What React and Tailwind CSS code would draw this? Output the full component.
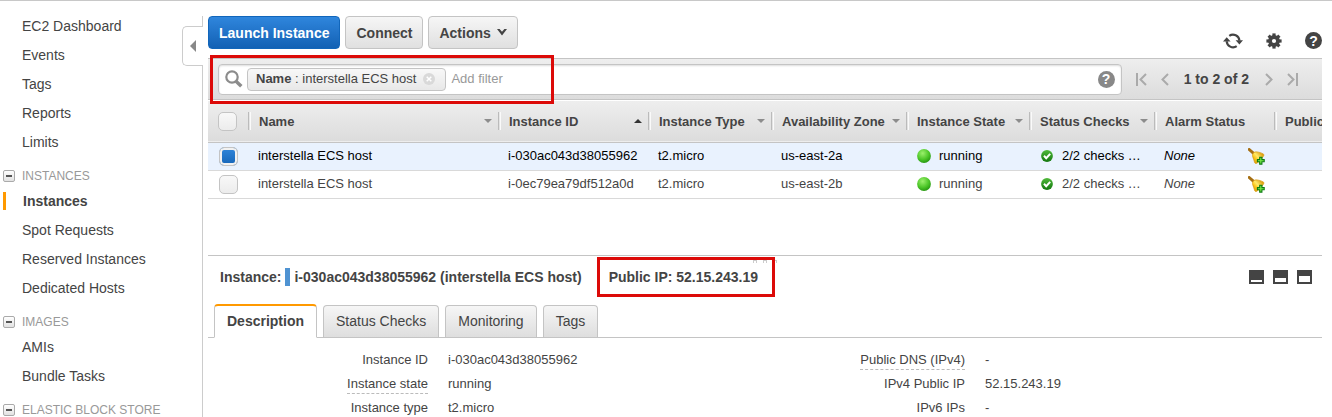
import React, { useState } from "react";
import clsx from "clsx";

const topLinks = ["EC2 Dashboard", "Events", "Tags", "Reports", "Limits"];

const groups = [
  { title: "INSTANCES", items: ["Instances", "Spot Requests", "Reserved Instances", "Dedicated Hosts"] },
  { title: "IMAGES", items: ["AMIs", "Bundle Tasks"] },
  { title: "ELASTIC BLOCK STORE", items: [] },
];

const columns = [
  { label: "Name", sort: "none" },
  { label: "Instance ID", sort: "asc" },
  { label: "Instance Type", sort: "none" },
  { label: "Availability Zone", sort: "none" },
  { label: "Instance State", sort: "none" },
  { label: "Status Checks", sort: "none" },
  { label: "Alarm Status" },
  { label: "Public" },
];

const instances = [
  { id: "i-030ac043d38055962", name: "interstella ECS host", type: "t2.micro", zone: "us-east-2a" },
  { id: "i-0ec79ea79df512a0d", name: "interstella ECS host", type: "t2.micro", zone: "us-east-2b" },
];

const tabs = ["Description", "Status Checks", "Monitoring", "Tags"];

const leftDetails = [
  { label: "Instance ID", value: "i-030ac043d38055962" },
  { label: "Instance state", value: "running", hint: true },
  { label: "Instance type", value: "t2.micro" },
];

const rightDetails = [
  { label: "Public DNS (IPv4)", value: "-", hint: true },
  { label: "IPv4 Public IP", value: "52.15.243.19" },
  { label: "IPv6 IPs", value: "-" },
];

function NavLink({ label, active }) {
  return (
    <li className="flex h-[29px] items-center pl-[3px]">
      <span className={clsx("h-[18px] w-[3px]", active && "bg-[#ff9900]")} />
      <a
        href="#"
        aria-current={active ? "page" : undefined}
        className={clsx("whitespace-nowrap", active ? "pl-[17px] font-bold" : "pl-4")}
      >
        {label}
      </a>
    </li>
  );
}

function Sidebar() {
  return (
    <aside className="flex shrink-0">
      <nav aria-label="EC2" className="w-[182px] pt-[10px] text-sm">
        <ul>
          {topLinks.map((label) => (
            <NavLink key={label} label={label} />
          ))}
        </ul>
        {groups.map((group) => (
          <section key={group.title}>
            <h2 className="flex h-[30px] items-center gap-[7px] pt-[10px] pl-[3px] text-xs whitespace-nowrap text-[#999]">
              <button
                type="button"
                aria-label={"Collapse " + group.title}
                className="flex size-3 items-center justify-center rounded-[2px] border border-[#aaa] bg-linear-to-b from-white to-[#e2e2e2]"
              >
                <span className="h-[2px] w-[6px] bg-[#555]" />
              </button>
              {group.title}
            </h2>
            <ul>
              {group.items.map((label) => (
                <NavLink key={label} label={label} active={label === "Instances"} />
              ))}
            </ul>
          </section>
        ))}
      </nav>
      <div className="flex w-[21px] flex-col pt-[15px]">
        <div className="h-[10px] border-r border-[#ccc]" />
        <button
          type="button"
          aria-label="Hide navigation"
          className="flex h-10 items-center justify-center rounded-l-[5px] border border-r-0 border-[#ccc]"
        >
          <svg width="6" height="12" viewBox="0 0 6 12" fill="#888">
            <path d="M6 0v12L0 6z" />
          </svg>
        </button>
        <div className="flex-1 border-r border-[#ccc]" />
      </div>
    </aside>
  );
}

function HelpIcon({ className }) {
  return (
    <button
      type="button"
      aria-label="Help"
      className={clsx(
        "flex size-[17px] items-center justify-center rounded-full text-sm leading-none font-bold text-white",
        className
      )}
    >
      ?
    </button>
  );
}

function RefreshIcon() {
  return (
    <svg width="20" height="16" viewBox="0 0 20 16">
      <g fill="none" stroke="#444" strokeWidth="2.2">
        <path d="M6.3 2.8A6.4 6.4 0 0 1 16.4 7.6" />
        <path d="M3.7 8.2A6.4 6.4 0 0 0 13.7 13.2" />
      </g>
      <path fill="#444" d="M3.7 4.2 7.6 8.6H0zM16.4 11.6 12.6 7.2H20z" />
    </svg>
  );
}

function GearIcon() {
  return (
    <svg width="16" height="16" viewBox="0 0 16 16">
      <g fill="#444">
        {[0, 45, 90, 135].map((angle) => (
          <rect key={angle} x="6.4" y="0.4" width="3.2" height="15.2" transform={`rotate(${angle} 8 8)`} />
        ))}
        <circle cx="8" cy="8" r="5.9" />
      </g>
      <circle cx="8" cy="8" r="2.1" fill="#fff" />
    </svg>
  );
}

function SearchIcon() {
  return (
    <svg width="18" height="18" viewBox="0 0 18 18" fill="none" stroke="#8c8c8c">
      <circle cx="7" cy="7" r="5.7" strokeWidth="2.2" />
      <path d="M11 11.2 16.3 16.3" strokeWidth="3.4" />
    </svg>
  );
}

function BellIcon() {
  return (
    <svg width="17" height="17" viewBox="0 0 17 17">
      <defs>
        <linearGradient id="bell" x1="0.15" y1="0.9" x2="0.9" y2="0.2">
          <stop offset="0" stopColor="#d99a0a" />
          <stop offset="0.3" stopColor="#fbc81c" />
          <stop offset="0.55" stopColor="#ffe96a" />
          <stop offset="1" stopColor="#dc9c08" />
        </linearGradient>
      </defs>
      <path d="M1.2 1.5 5.6 5.4" stroke="#a66f12" strokeWidth="3" strokeLinecap="round" />
      <path
        d="M4.600 8.400C4 6 6 3.600 8.800 3.900c2.400.3 4 .7 6.400 2 1 .6.800 1.400.2 2.300-1.700 2.800-3.800 5.200-6.600 7-1 .6-1.900.2-2.200-.8C6.200 12.200 5.200 10.600 4.600 8.400z"
        fill="url(#bell)"
        stroke="#d9980e"
        strokeWidth="0.7"
      />
      <path
        d="M11.700 9.300h2.200v2.300h2.300v2.200h-2.300v2.300h-2.200v-2.300H9.400v-2.200h2.300z"
        fill="#7cf04a"
        stroke="#0b7a10"
        strokeWidth="1.100"
      />
    </svg>
  );
}

function StateDot() {
  return (
    <svg width="14" height="14" viewBox="0 0 14 14">
      <defs>
        <radialGradient id="dot" cx="0.4" cy="0.3" r="0.75">
          <stop offset="0" stopColor="#9bf06c" />
          <stop offset="0.6" stopColor="#4cc628" />
          <stop offset="1" stopColor="#23920f" />
        </radialGradient>
      </defs>
      <circle cx="7" cy="7" r="6.900" fill="url(#dot)" />
    </svg>
  );
}

function CheckBadge() {
  return (
    <svg width="12" height="12" viewBox="0 0 12 12">
      <defs>
        <linearGradient id="badge" x1="0" y1="0" x2="0" y2="1">
          <stop offset="0" stopColor="#4fb83a" />
          <stop offset="1" stopColor="#14780f" />
        </linearGradient>
      </defs>
      <circle cx="6" cy="6" r="5.900" fill="url(#badge)" />
      <path d="M3 5.800 5.200 8.200 9.200 3.800" fill="none" stroke="#fff" strokeWidth="2" />
    </svg>
  );
}

function PagerIcon({ d, width }) {
  return (
    <svg width={width} height="13" viewBox={`0 0 ${width} 13`} fill="none" stroke="#aaa" strokeWidth="2">
      <path d={d} />
    </svg>
  );
}

function Pager() {
  return (
    <div className="flex items-center gap-[14px] pr-6 text-sm font-bold">
      <button type="button" aria-label="First page">
        <PagerIcon width={11} d="M1 0v13M10 1 4.500 6.500 10 12" />
      </button>
      <button type="button" aria-label="Previous page">
        <PagerIcon width={8} d="M7 1 1.500 6.500 7 12" />
      </button>
      <span className="px-px whitespace-nowrap">1 to 2 of 2</span>
      <button type="button" aria-label="Next page" className="pl-px">
        <PagerIcon width={8} d="M1 1 6.500 6.500 1 12" />
      </button>
      <button type="button" aria-label="Last page">
        <PagerIcon width={11} d="M1 1 6.500 6.500 1 12M10 0v13" />
      </button>
    </div>
  );
}

function SortArrow({ sort }) {
  return (
    <svg width="8" height="4" viewBox="0 0 8 4" className="shrink-0">
      {sort === "asc" ? <path d="M0 4 4 0l4 4z" fill="#333" /> : <path d="M0 0h8L4 4z" fill="#8c8c8c" />}
    </svg>
  );
}

function Checkbox({ label, ...rest }) {
  return (
    <input
      type="checkbox"
      aria-label={label}
      {...rest}
      className="block size-[19px] appearance-none rounded-[5px] border border-[#c4c4c4] bg-linear-to-b from-[#f8f8f8] to-[#ececec] checked:from-[#2f86db] checked:to-[#1465b8] checked:shadow-[inset_0_0_0_2px_#f1f1f1]"
    />
  );
}

function Toolbar() {
  const base = "flex h-[33px] items-center rounded-[4px] border px-[10px] text-sm font-bold whitespace-nowrap";
  const plain = "border-[#c4c4c4] bg-linear-to-b from-[#f6f6f6] to-[#e0e0e0]";
  return (
    <div className="flex items-center justify-between">
      <div className="flex gap-[5px]">
        <button
          type="button"
          className={clsx(base, "border-[#1166bb] bg-linear-to-b from-[#2f86dd] to-[#1261b4] text-white")}
        >
          Launch Instance
        </button>
        <button type="button" className={clsx(base, plain)}>
          Connect
        </button>
        <button type="button" className={clsx(base, plain, "gap-[6px]")}>
          Actions
          <svg width="10" height="7" viewBox="0 0 10 7">
            <path d="M0 0h2.600L5 2.700 7.400 0H10L5 6.600z" fill="#444" />
          </svg>
        </button>
      </div>
      <div className="flex items-center gap-[23px] pt-4">
        <button type="button" aria-label="Refresh">
          <RefreshIcon />
        </button>
        <button type="button" aria-label="Settings">
          <GearIcon />
        </button>
        <HelpIcon className="bg-[#444]" />
      </div>
    </div>
  );
}

function FilterBar() {
  return (
    <div className="relative mt-[9px] flex h-[42px] items-center gap-[14px] border-y border-[#c4c4c4] bg-linear-to-b from-[#eee] to-[#dcdcdc] pl-[10px]">
      <div className="flex h-[31px] min-w-0 flex-1 items-center rounded-[4px] border border-[#c4c4c4] bg-white px-[6px] shadow-[inset_0_1px_2px_#ddd]">
        <SearchIcon />
        <div className="ml-[4px] flex h-[23px] items-center gap-[7px] rounded-[4px] border border-[#c4c4c4] bg-linear-to-b from-[#f8f8f8] to-[#e8e8e8] pr-[10px] pl-2 text-[13px] whitespace-nowrap">
          <span>
            <b>Name</b> : interstella ECS host
          </span>
          <button type="button" aria-label="Remove filter">
            <svg width="12" height="12" viewBox="0 0 12 12">
              <circle cx="6" cy="6" r="6" fill="#d9d9d9" />
              <path d="M3.700 3.700 8.300 8.300M8.300 3.700 3.700 8.300" stroke="#fff" strokeWidth="1.500" />
            </svg>
          </button>
        </div>
        <input
          type="text"
          aria-label="Add filter"
          placeholder="Add filter"
          className="ml-[5px] min-w-0 flex-1 bg-transparent text-[13px] outline-none placeholder:text-[#999]"
        />
        <HelpIcon className="bg-[#888]" />
      </div>
      <Pager />
      <div className="pointer-events-none absolute -top-1 left-[2px] z-10 h-[49px] w-[344px] border-[3px] border-[#dc0a08]" />
    </div>
  );
}

function InstanceTable() {
  const [selected, setSelected] = useState(instances[0].id);
  return (
    <div className="mt-px overflow-hidden">
      <table className="w-full table-fixed border-collapse text-left text-[13px]">
        <colgroup>
          <col className="w-10" />
          <col />
          <col className="w-[150px]" />
          <col className="w-[123px]" />
          <col className="w-[135px]" />
          <col className="w-[123px]" />
          <col className="w-[125px]" />
          <col className="w-[120px]" />
          <col className="w-12" />
        </colgroup>
        <thead>
          <tr className="h-[41px] border-b border-[#c4c4c4] bg-linear-to-b from-[#eee] to-[#dcdcdc]">
            <th className="p-0 pl-[10px]">
              <Checkbox label="Select all instances" />
            </th>
            {columns.map(({ label, sort }) => (
              <th key={label} className="overflow-hidden p-0">
                <div className="flex h-[18px] items-center justify-between border-l border-[#bbb] pr-[6px] pl-px">
                  <span className="flex h-[18px] items-center border-l border-[#fafafa] pl-2 whitespace-nowrap">
                    {label}
                  </span>
                  {sort && <SortArrow sort={sort} />}
                </div>
              </th>
            ))}
          </tr>
        </thead>
        <tbody>
          {instances.map((row) => (
            <tr
              key={row.id}
              className={clsx(
                "h-7 border-b border-[#d9d9d9] whitespace-nowrap",
                row.id === selected && "bg-[#e9f2fe] text-black"
              )}
            >
              <td className="p-0 pl-[11px]">
                <Checkbox
                  label={"Select " + row.id}
                  checked={row.id === selected}
                  onChange={() => setSelected(row.id)}
                />
              </td>
              <td className="p-0 pl-[10px]">{row.name}</td>
              <td className="p-0 pl-[10px]">{row.id}</td>
              <td className="p-0 pl-[10px]">{row.type}</td>
              <td className="p-0 pl-[10px]">{row.zone}</td>
              <td className="p-0 pl-[11px]">
                <div className="flex items-center gap-2">
                  <StateDot />
                  running
                </div>
              </td>
              <td className="p-0 pl-3">
                <div className="flex items-center gap-[9px]">
                  <CheckBadge />
                  2/2 checks …
                </div>
              </td>
              <td className="p-0 pr-[9px] pl-[10px]">
                <div className="flex items-center justify-between">
                  <i>None</i>
                  <button type="button" aria-label="Create alarm">
                    <BellIcon />
                  </button>
                </div>
              </td>
              <td className="p-0" />
            </tr>
          ))}
        </tbody>
      </table>
    </div>
  );
}

function DetailList({ items }) {
  return (
    <dl className="text-[13px]">
      {items.map(({ label, value, hint }) => (
        <div key={label} className="flex h-6 items-center gap-5">
          <dt className="flex w-[200px] justify-end leading-5">
            <span className={clsx("h-5", hint && "border-b border-dashed border-[#bbb]")}>{label}</span>
          </dt>
          <dd className="leading-5">{value}</dd>
        </div>
      ))}
    </dl>
  );
}

function LayoutButton({ label, cut }) {
  return (
    <button type="button" aria-label={label}>
      <svg width="15" height="14" viewBox="0 0 15 14">
        <path d="M0 0h15v14H0z" fill="#444" />
        <rect x="2" y={12 - cut} width="11" height={cut} fill="#fff" />
      </svg>
    </button>
  );
}

function DetailPanel() {
  const [tab, setTab] = useState(tabs[0]);
  return (
    <section className="relative mt-14 border-t border-[#c4c4c4]">
      <div className="absolute top-1 left-1/2 flex -translate-x-1/2 gap-[6px]">
        {[0, 1, 2].map((n) => (
          <span key={n} className="h-[3px] w-1 border-x border-t border-[#ccc]" />
        ))}
      </div>
      <div className="flex items-center justify-between pt-px pr-[10px] pl-3">
        <h1 className="flex items-center text-sm font-bold whitespace-nowrap">
          Instance:
          <span className="mx-[4px] h-[18px] w-[5px] bg-[#4f93d2]" />
          i-030ac043d38055962 (interstella ECS host)
          <span className="relative ml-[15px] flex h-10 items-center border-[3px] border-[#dc0a08] pr-[14px] pl-[9px]">
            Public IP: 52.15.243.19
          </span>
        </h1>
        <div className="flex gap-[9px]">
          <LayoutButton label="Minimize panel" cut={2} />
          <LayoutButton label="Half panel" cut={4} />
          <LayoutButton label="Full panel" cut={6} />
        </div>
      </div>
      <div role="tablist" className="mt-[7px] flex items-end gap-[6px] border-b border-[#c4c4c4] pl-[6px] text-sm">
        {tabs.map((name) => (
          <button
            key={name}
            type="button"
            role="tab"
            aria-selected={name === tab}
            onClick={() => setTab(name)}
            className={clsx(
              "rounded-t-[4px] border border-[#c4c4c4] px-3 whitespace-nowrap",
              name === tab
                ? "-mb-px h-[34px] border-t-2 border-t-[#ff9900] border-b-white bg-white font-bold"
                : "h-8 border-b-0 bg-linear-to-b from-[#f6f6f6] to-[#dedede]"
            )}
          >
            {name}
          </button>
        ))}
      </div>
      <div role="tabpanel" aria-label={tab} className="grid grid-cols-2 px-5 pt-[10px]">
        <DetailList items={leftDetails} />
        <DetailList items={rightDetails} />
      </div>
    </section>
  );
}

export default function App() {
  return (
    <div className="flex h-screen overflow-hidden border-t border-[#c8c8c8] bg-white font-['Liberation_Sans',Arial,sans-serif] text-[#444]">
      <Sidebar />
      <main className="min-w-0 flex-1 pt-[15px] pr-[10px] pl-[5px]">
        <Toolbar />
        <FilterBar />
        <InstanceTable />
        <DetailPanel />
      </main>
    </div>
  );
}
